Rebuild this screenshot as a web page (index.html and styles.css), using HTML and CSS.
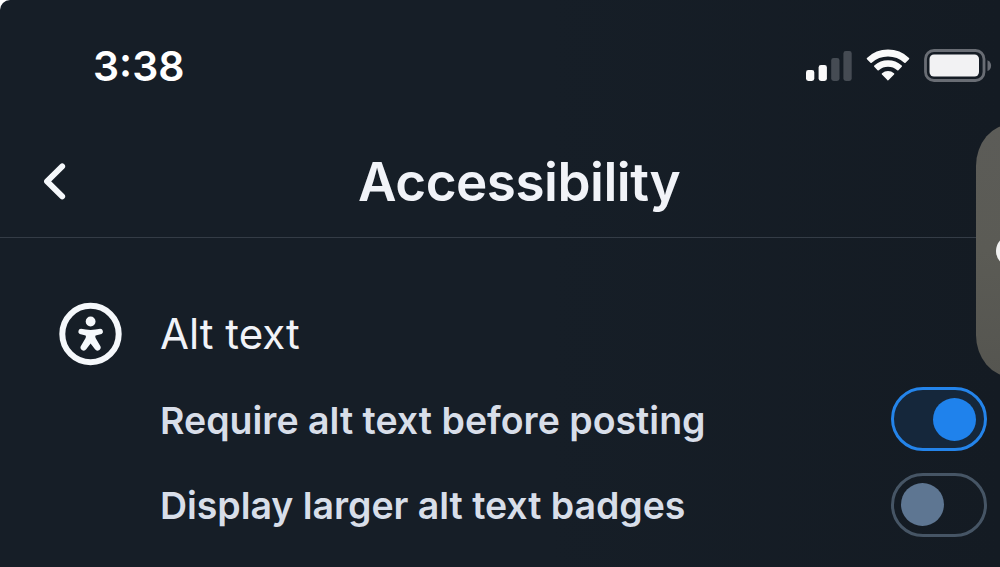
FILE: index.html
```html
<!DOCTYPE html>
<html lang="en">
<head>
<meta charset="utf-8">
<title>Accessibility</title>
<link rel="stylesheet" href="styles.css">
</head>
<body>
<main class="screen">
  <div class="status-bar">
    <time class="clock">3:38</time>
    <div class="status-icons">
      <svg class="signal" width="46" height="32" viewBox="0 0 46 32">
        <rect class="lit" x="0" y="20" width="8.3" height="11" rx="2.4"/>
        <rect class="lit" x="12.6" y="15" width="8.3" height="16" rx="2.4"/>
        <rect class="dim" x="25.2" y="8" width="8.3" height="23" rx="2.4"/>
        <rect class="dim" x="37.4" y="1" width="8.3" height="30" rx="2.4"/>
      </svg>
      <svg class="wifi" width="44" height="33" viewBox="0 0 44 33">
        <path d="M1.600 9.600A29.800 29.800 0 0 1 42.400 9.600L38.900 13.100A25.200 25.200 0 0 0 5.100 13.100Z"/>
        <path d="M8.900 17.200A19.500 19.500 0 0 1 35.100 17.200L31.800 20.500A14.800 14.800 0 0 0 12.200 20.500Z"/>
        <path d="M16.600 24.900A8.700 8.700 0 0 1 27.400 24.900L22 30.500Z"/>
      </svg>
      <svg class="battery" width="68" height="34" viewBox="0 0 68 34">
        <rect class="shell" x="1.500" y="1.500" width="58.500" height="30" rx="8.500"/>
        <rect class="charge" x="5.500" y="5.500" width="49.500" height="22" rx="4.500"/>
        <path class="cap" d="M63.500 11.300C68.300 13 68.300 20.300 63.500 22Z"/>
      </svg>
    </div>
  </div>

  <header class="header">
    <svg class="back" width="24" height="40" viewBox="0 0 24 40">
      <path d="M19.200 4.400L4 19.400L19.200 34.400"/>
    </svg>
    <h1 class="title">Accessibility</h1>
  </header>

  <section class="settings">
    <div class="group">
      <svg class="group-icon" width="63" height="64" viewBox="0 0 63 64">
        <circle class="ring" cx="31.500" cy="32" r="28.200"/>
        <circle class="head" cx="31.600" cy="19.500" r="4.900"/>
        <path class="figure" d="M22 26.800Q31.500 29 41.300 26.800A2.800 2.800 0 0 1 42.600 32L36.600 33.400Q35.900 34 36.600 36L41 43.600A3 3 0 0 1 36 47.300L31.600 41.500L27.200 47.300A3 3 0 0 1 22.200 43.600L26.600 36Q27.300 34 26.600 33.400L20.700 32A2.800 2.800 0 0 1 22 26.800Z"/>
      </svg>
      <h2 class="group-title">Alt text</h2>
    </div>
    <div class="row">
      <span class="label">Require alt text before posting</span>
      <span class="toggle toggle-on" role="switch" aria-checked="true"><span class="knob"></span></span>
    </div>
    <div class="row">
      <span class="label label-tight">Display larger alt text badges</span>
      <span class="toggle" role="switch" aria-checked="false"><span class="knob"></span></span>
    </div>
  </section>

  <aside class="edge-panel">
    <span class="edge-handle"></span>
  </aside>
</main>
</body>
</html>
```

FILE: styles.css
```css
* { box-sizing: border-box; }

body {
  margin: 0;
  background: #fff;
  font-family: Inter, "Liberation Sans", sans-serif;
}

.screen {
  position: relative;
  width: 1000px;
  height: 567px;
  overflow: hidden;
  border-top-left-radius: 10px;
  background: linear-gradient(90deg, #161e27 0%, #161e27 55%, #141b23 100%);
}

.status-bar {
  display: flex;
  justify-content: space-between;
  height: 130px;
  padding: 39px 8px 0 93px;
}

.clock {
  height: 54px;
  line-height: 54px;
  font-size: 41px;
  font-weight: 600;
  color: #fff;
}

.status-icons {
  display: flex;
  align-items: flex-start;
  padding-top: 10px;
}

.signal { margin-top: 1px; }
.lit { fill: #fafafa; }
.dim { fill: #454b53; }

.wifi {
  margin-left: 14px;
  fill: #fafafa;
  stroke: #fafafa;
  stroke-width: 1.8;
  stroke-linejoin: round;
}

.battery { margin-left: 14px; }
.shell { fill: none; stroke: #696d74; stroke-width: 2.8; }
.charge { fill: #f2f2f3; }
.cap { fill: #696d74; }

.header {
  display: flex;
  align-items: center;
  height: 108px;
  padding: 0 0 3px 43px;
  border-bottom: 1px solid #343c46;
}

.back {
  fill: none;
  stroke: #f5f8fb;
  stroke-width: 5.8;
  stroke-linecap: round;
  stroke-linejoin: round;
}

.title {
  margin: 0 0 0 291px;
  font-size: 53px;
  line-height: 64px;
  font-weight: 600;
  letter-spacing: -0.5px;
  white-space: nowrap;
  color: #f1f3f8;
}

.settings { padding: 64px 13px 0 59px; }

.group {
  display: flex;
  align-items: center;
  height: 64px;
  gap: 38px;
}

.ring { fill: none; stroke: #f5f8fb; stroke-width: 6; }
.head, .figure { fill: #f5f8fb; }

.group-title {
  margin: 0;
  font-size: 42px;
  line-height: 56px;
  font-weight: 400;
  color: #f1f3f8;
}

.row {
  display: flex;
  align-items: center;
  justify-content: space-between;
  height: 64px;
  margin-top: 21.4px;
  padding-left: 101px;
}

.label {
  padding-top: 3px;
  font-size: 37.5px;
  line-height: 48px;
  font-weight: 600;
  white-space: nowrap;
  color: #d8dee9;
}

.label-tight { letter-spacing: -0.05px; }

.toggle {
  display: flex;
  align-items: center;
  width: 96px;
  height: 64px;
  padding: 0 8px 0 7px;
  border: 3px solid #465565;
  border-radius: 32px;
}

.knob {
  width: 43px;
  height: 43px;
  border-radius: 50%;
  background: #5e7692;
}

.toggle-on {
  justify-content: flex-end;
  border-color: #2484ea;
  background: #15273b;
}

.toggle-on .knob { background: #1f82ec; }

.edge-panel {
  position: absolute;
  top: 124px;
  left: 976px;
  width: 80px;
  height: 253px;
  border-radius: 36px / 42px;
  background: linear-gradient(#5c5c58, #5b5b55 50%, #555550);
}

.edge-handle {
  position: absolute;
  top: 111px;
  left: 20px;
  width: 32px;
  height: 32px;
  border-radius: 50%;
  background: #f2f2f2;
}
```
